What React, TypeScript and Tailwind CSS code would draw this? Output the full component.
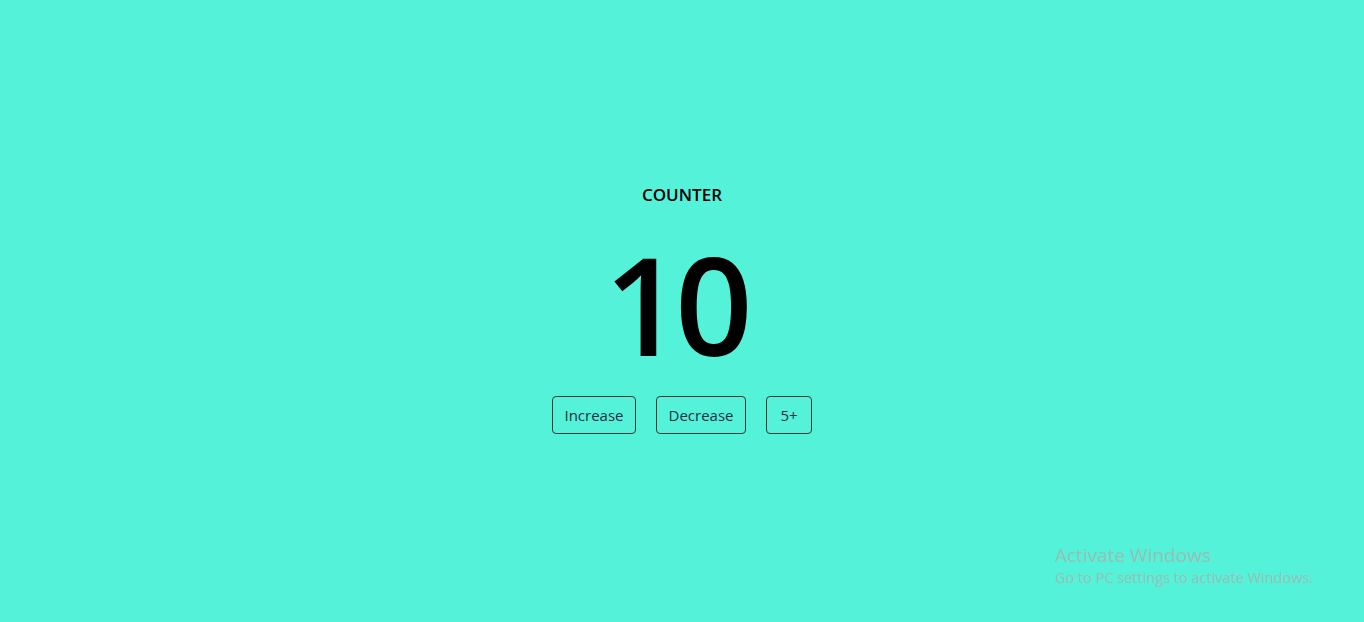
import React, { useState } from "react";

function App() {
  const [count, setCount] = useState(10);

  return (
    <div className="relative h-[622px] w-full bg-[#55f2da] font-['Open_Sans',sans-serif] text-black overflow-hidden">
      <div className="flex flex-col items-center pt-[184px]">
        <h1 className="text-[17px] leading-[22px] font-semibold">COUNTER</h1>
        <div className="mt-[30px] mr-[14px] text-[136px] leading-[136px] font-semibold tracking-[-7px]">{count}</div>
        <div className="mt-[24px] flex gap-5">
          <button
            onClick={() => setCount(count + 1)}
            className="h-[38px] w-[84px] rounded border border-[#2a3a38] text-[15px] text-[#1d3040]"
          >
            Increase
          </button>
          <button
            onClick={() => setCount(count - 1)}
            className="h-[38px] w-[90px] rounded border border-[#2a3a38] text-[15px] text-[#1d3040]"
          >
            Decrease
          </button>
          <button
            onClick={() => setCount(count + 5)}
            className="h-[38px] w-[46px] rounded border border-[#2a3a38] text-[15px] text-[#1d3040]"
          >
            5+
          </button>
        </div>
      </div>
      <div className="absolute left-[1055px] top-[543px] text-[#98bfb8]">
        <div className="text-[19px] leading-[25px]">Activate Windows</div>
        <div className="text-[14.5px] leading-[19px]">Go to PC settings to activate Windows.</div>
      </div>
    </div>
  );
}

export default App;
